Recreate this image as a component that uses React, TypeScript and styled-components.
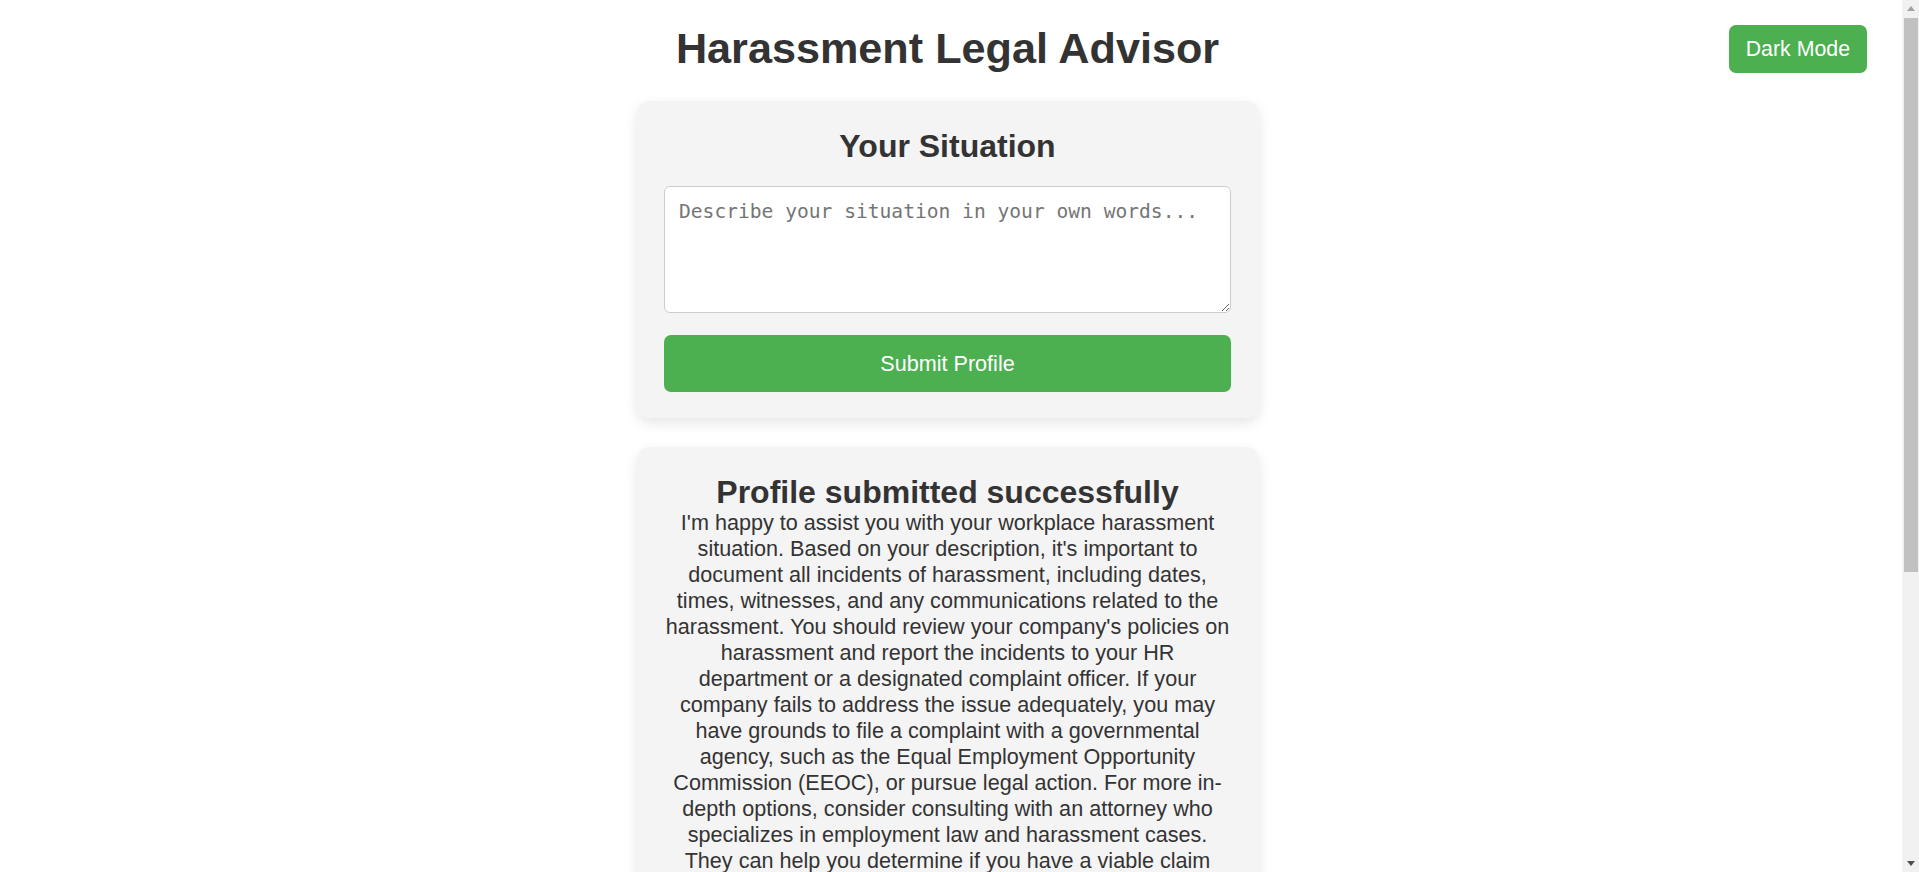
import React from "react";
import styled, { createGlobalStyle } from "styled-components";

const GlobalStyle = createGlobalStyle`
  html, body {
    margin: 0;
    padding: 0;
    background: #ffffff;
  }
  body {
    font-family: "Liberation Sans", Arial, sans-serif;
    color: #333333;
  }
`;

const Page = styled.main`
  position: relative;
  display: flex;
  flex-direction: column;
  align-items: center;
  padding: 24px 24px 28px 0;
`;

const Title = styled.h1`
  margin: 0 0 28px;
  font-size: 43.2px;
  line-height: 49px;
  font-weight: 700;
  color: #333333;
`;

const ModeToggle = styled.button`
  position: absolute;
  top: 25px;
  right: 52px;
  height: 48px;
  padding: 0 17px;
  border: none;
  border-radius: 7px;
  background: #4caf50;
  color: #ffffff;
  font-family: "Liberation Sans", Arial, sans-serif;
  font-size: 21.33px;
  cursor: pointer;
`;

const Card = styled.section`
  box-sizing: border-box;
  width: 622px;
  padding: 27px 27.5px 26px;
  margin-bottom: 29px;
  background: #f4f4f4;
  border-radius: 13px;
  box-shadow: 0 5px 13px rgba(0, 0, 0, 0.1);
  text-align: center;
`;

const CardHeading = styled.h2<{ $gap: number; $lh: number }>`
  margin: 0 0 ${({ $gap }) => $gap}px;
  font-size: 32px;
  line-height: ${({ $lh }) => $lh}px;
  font-weight: 700;
  color: #333333;
`;

const SituationInput = styled.textarea`
  display: block;
  box-sizing: border-box;
  width: 100%;
  height: 127px;
  margin: 0 0 22px;
  padding: 12px 14px;
  border: 1.33px solid #cccccc;
  border-radius: 6px;
  background: #ffffff;
  font-family: "DejaVu Sans Mono", "Liberation Mono", monospace;
  font-size: 19.6px;
  line-height: 25px;
  color: #333333;

  &::placeholder {
    color: #757575;
  }
`;

const SubmitButton = styled.button`
  display: block;
  width: 100%;
  height: 57px;
  border: none;
  border-radius: 7px;
  background: #4caf50;
  color: #ffffff;
  font-family: "Liberation Sans", Arial, sans-serif;
  font-size: 21.6px;
  cursor: pointer;
`;

const Answer = styled.p`
  margin: 0 -6px;
  white-space: pre;
  font-size: 21.6px;
  line-height: 26px;
  color: #333333;
`;

/* window scrollbar as it appears in the capture */
const ScrollRail = styled.div`
  position: fixed;
  top: 0;
  right: 0;
  width: 17px;
  height: 100vh;
  display: flex;
  flex-direction: column;
  background: #f1f1f1;
`;

const RailArrow = styled.div<{ $dir: "up" | "down" }>`
  flex: none;
  height: 17px;
  display: flex;
  align-items: center;
  justify-content: center;

  &::before {
    content: "";
    width: 0;
    height: 0;
    border-left: 4.5px solid transparent;
    border-right: 4.5px solid transparent;
    ${({ $dir }) =>
      $dir === "up"
        ? "border-bottom: 5px solid #a3a3a3;"
        : "border-top: 5px solid #505050;"}
  }
`;

const RailThumb = styled.div`
  flex: none;
  height: 554px;
  margin: 1px 1px 0 2px;
  background: #c1c1c1;
`;

const RailSpace = styled.div`
  flex: 1;
`;

// lines as the advisor response was laid out in the panel
const ADVICE = [
  "I'm happy to assist you with your workplace harassment",
  "situation. Based on your description, it's important to",
  "document all incidents of harassment, including dates,",
  "times, witnesses, and any communications related to the",
  "harassment. You should review your company's policies on",
  "harassment and report the incidents to your HR",
  "department or a designated complaint officer. If your",
  "company fails to address the issue adequately, you may",
  "have grounds to file a complaint with a governmental",
  "agency, such as the Equal Employment Opportunity",
  "Commission (EEOC), or pursue legal action. For more in-",
  "depth options, consider consulting with an attorney who",
  "specializes in employment law and harassment cases.",
  "They can help you determine if you have a viable claim",
  "and guide you through the legal process, including any",
  "deadlines that may apply to your case. Keep in mind that",
  "complaints to the EEOC generally must be filed within",
  "180 days of the last incident, although this deadline",
  "may be extended to 300 days if a state or local agency",
  "enforces a law prohibiting the same type of discrimination.",
  "It is also important to know that retaliation for",
  "reporting harassment is illegal, so if you experience any",
  "negative consequences after making a complaint, such as",
  "demotion or termination, be sure to document those as",
  "well. Many attorneys offer free initial consultations,",
  "and some work on a contingency basis, meaning they only",
  "get paid if you win your case. Remember that you are not",
  "alone, and support is available to help you.",
].join("\n");

export default function App() {
  const [situation, setSituation] = React.useState("");

  return (
    <>
      <GlobalStyle />
      <Page>
        <ModeToggle type="button">Dark Mode</ModeToggle>
        <Title>Harassment Legal Advisor</Title>
        <Card>
          <CardHeading $gap={21} $lh={37}>
            Your Situation
          </CardHeading>
          <SituationInput
            value={situation}
            onChange={(e) => setSituation(e.target.value)}
            placeholder="Describe your situation in your own words..."
          />
          <SubmitButton type="button">Submit Profile</SubmitButton>
        </Card>
        <Card>
          <CardHeading $gap={0} $lh={36}>
            Profile submitted successfully
          </CardHeading>
          <Answer>{ADVICE}</Answer>
        </Card>
      </Page>
      <ScrollRail aria-hidden="true">
        <RailArrow $dir="up" />
        <RailThumb />
        <RailSpace />
        <RailArrow $dir="down" />
      </ScrollRail>
    </>
  );
}
